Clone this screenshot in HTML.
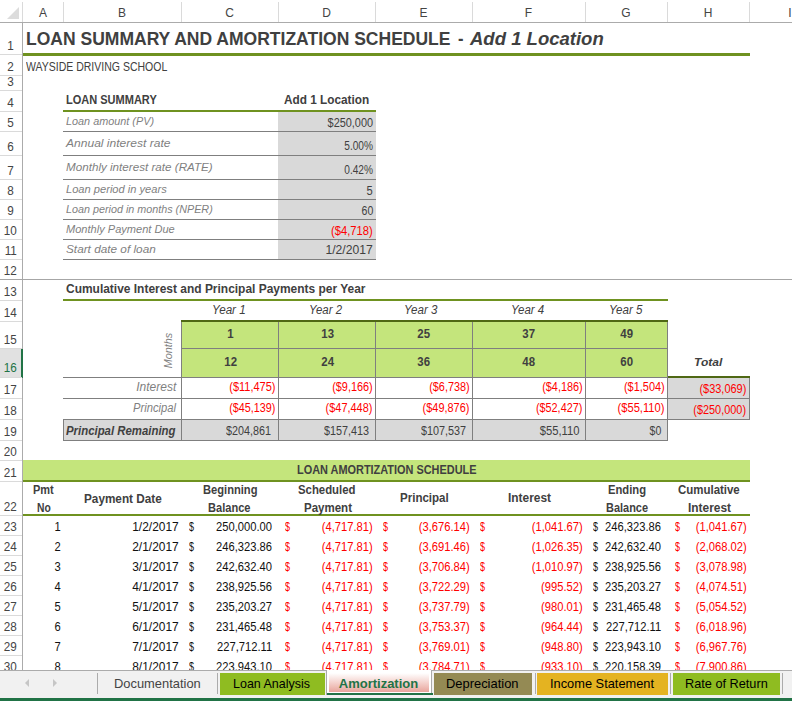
<!DOCTYPE html>
<html><head><meta charset="utf-8"><title>Loan Amortization</title>
<style>
html,body{margin:0;padding:0;background:#ffffff;}
#s{position:relative;width:792px;height:701px;overflow:hidden;background:#ffffff;font-family:"Liberation Sans", sans-serif;}
#s div,#s span,#s svg{position:absolute;}
#s span{white-space:pre;}
</style></head><body><div id="s">
<div style="left:0px;top:0px;width:792px;height:22px;background:#ffffff;"></div>
<div style="left:0px;top:22px;width:792px;height:1px;background:#ababab;"></div>
<div style="left:22px;top:22px;width:1px;height:648px;background:#ababab;"></div>
<div style="left:22px;top:2px;width:1px;height:20px;background:#dadada;"></div>
<svg style="left:6px;top:6px" width="14" height="14"><polygon points="13,1 13,13 1,13" fill="#dcdcdc"/></svg>
<div style="left:63px;top:2px;width:1px;height:20px;background:#dadada;"></div>
<div style="left:181px;top:2px;width:1px;height:20px;background:#dadada;"></div>
<div style="left:278px;top:2px;width:1px;height:20px;background:#dadada;"></div>
<div style="left:375px;top:2px;width:1px;height:20px;background:#dadada;"></div>
<div style="left:472px;top:2px;width:1px;height:20px;background:#dadada;"></div>
<div style="left:585px;top:2px;width:1px;height:20px;background:#dadada;"></div>
<div style="left:667px;top:2px;width:1px;height:20px;background:#dadada;"></div>
<div style="left:749px;top:2px;width:1px;height:20px;background:#dadada;"></div>
<div style="left:0px;top:54px;width:22px;height:1px;background:#dadada;"></div>
<div style="left:0px;top:75px;width:22px;height:1px;background:#dadada;"></div>
<div style="left:0px;top:90px;width:22px;height:1px;background:#dadada;"></div>
<div style="left:0px;top:111px;width:22px;height:1px;background:#dadada;"></div>
<div style="left:0px;top:131px;width:22px;height:1px;background:#dadada;"></div>
<div style="left:0px;top:155px;width:22px;height:1px;background:#dadada;"></div>
<div style="left:0px;top:179px;width:22px;height:1px;background:#dadada;"></div>
<div style="left:0px;top:199px;width:22px;height:1px;background:#dadada;"></div>
<div style="left:0px;top:219px;width:22px;height:1px;background:#dadada;"></div>
<div style="left:0px;top:239px;width:22px;height:1px;background:#dadada;"></div>
<div style="left:0px;top:259px;width:22px;height:1px;background:#dadada;"></div>
<div style="left:0px;top:279px;width:22px;height:1px;background:#dadada;"></div>
<div style="left:0px;top:300px;width:22px;height:1px;background:#dadada;"></div>
<div style="left:0px;top:321px;width:22px;height:1px;background:#dadada;"></div>
<div style="left:0px;top:348px;width:22px;height:1px;background:#dadada;"></div>
<div style="left:0px;top:349px;width:21px;height:28px;background:#e1e1e1;"></div>
<div style="left:21px;top:349px;width:2px;height:29px;background:#217346;"></div>
<div style="left:0px;top:377px;width:22px;height:1px;background:#dadada;"></div>
<div style="left:0px;top:398px;width:22px;height:1px;background:#dadada;"></div>
<div style="left:0px;top:419px;width:22px;height:1px;background:#dadada;"></div>
<div style="left:0px;top:440px;width:22px;height:1px;background:#dadada;"></div>
<div style="left:0px;top:460px;width:22px;height:1px;background:#dadada;"></div>
<div style="left:0px;top:481px;width:22px;height:1px;background:#dadada;"></div>
<div style="left:0px;top:515px;width:22px;height:1px;background:#dadada;"></div>
<div style="left:0px;top:535px;width:22px;height:1px;background:#dadada;"></div>
<div style="left:0px;top:555px;width:22px;height:1px;background:#dadada;"></div>
<div style="left:0px;top:575px;width:22px;height:1px;background:#dadada;"></div>
<div style="left:0px;top:595px;width:22px;height:1px;background:#dadada;"></div>
<div style="left:0px;top:615px;width:22px;height:1px;background:#dadada;"></div>
<div style="left:0px;top:635px;width:22px;height:1px;background:#dadada;"></div>
<div style="left:0px;top:655px;width:22px;height:1px;background:#dadada;"></div>
<div style="left:23px;top:53px;width:727px;height:3px;background:#6f9220;"></div>
<div style="left:63px;top:110px;width:313px;height:2px;background:#6f9220;"></div>
<div style="left:278px;top:112px;width:98px;height:147px;background:#d9d9d9;"></div>
<div style="left:63px;top:131px;width:313px;height:1px;background:#7f7f7f;"></div>
<div style="left:63px;top:155px;width:313px;height:1px;background:#7f7f7f;"></div>
<div style="left:63px;top:179px;width:313px;height:1px;background:#7f7f7f;"></div>
<div style="left:63px;top:199px;width:313px;height:1px;background:#7f7f7f;"></div>
<div style="left:63px;top:219px;width:313px;height:1px;background:#7f7f7f;"></div>
<div style="left:63px;top:239px;width:313px;height:1px;background:#7f7f7f;"></div>
<div style="left:63px;top:259px;width:313px;height:1px;background:#7f7f7f;"></div>
<div style="left:0px;top:279px;width:792px;height:1px;background:#a6a6a6;"></div>
<div style="left:63px;top:299px;width:605px;height:2px;background:#6f9220;"></div>
<div style="left:181px;top:320px;width:486px;height:57px;background:#c4e57c;"></div>
<div style="left:181px;top:320px;width:487px;height:2px;background:#4f6814;"></div>
<div style="left:181px;top:348px;width:486px;height:1px;background:#7f7f7f;"></div>
<div style="left:63px;top:377px;width:604px;height:1px;background:#7f7f7f;"></div>
<div style="left:63px;top:398px;width:686px;height:1px;background:#7f7f7f;"></div>
<div style="left:63px;top:419px;width:686px;height:1px;background:#7f7f7f;"></div>
<div style="left:63px;top:420px;width:604px;height:20px;background:#d9d9d9;"></div>
<div style="left:63px;top:440px;width:605px;height:1px;background:#7f7f7f;"></div>
<div style="left:63px;top:419px;width:1px;height:22px;background:#7f7f7f;"></div>
<div style="left:667px;top:378px;width:82px;height:41px;background:#d9d9d9;"></div>
<div style="left:667px;top:376px;width:83px;height:2px;background:#4f6814;"></div>
<div style="left:749px;top:378px;width:1px;height:42px;background:#7f7f7f;"></div>
<div style="left:667px;top:398px;width:82px;height:1px;background:#7f7f7f;"></div>
<div style="left:667px;top:419px;width:83px;height:1px;background:#7f7f7f;"></div>
<div style="left:181px;top:322px;width:1px;height:119px;background:#7f7f7f;"></div>
<div style="left:278px;top:322px;width:1px;height:119px;background:#7f7f7f;"></div>
<div style="left:375px;top:322px;width:1px;height:119px;background:#7f7f7f;"></div>
<div style="left:472px;top:322px;width:1px;height:119px;background:#7f7f7f;"></div>
<div style="left:585px;top:322px;width:1px;height:119px;background:#7f7f7f;"></div>
<div style="left:667px;top:322px;width:1px;height:119px;background:#7f7f7f;"></div>
<div style="left:23px;top:460px;width:727px;height:20px;background:#c4e57c;"></div>
<div style="left:23px;top:480px;width:727px;height:2px;background:#6f9220;"></div>
<div style="left:23px;top:514px;width:727px;height:2px;background:#6f9220;"></div>
<span style="font-size:12px;line-height:12px;color:#444444;left:38.99px;top:6.84px;">A</span>
<span style="font-size:12px;line-height:12px;color:#444444;left:117.99px;top:6.84px;">B</span>
<span style="font-size:12px;line-height:12px;color:#444444;left:225.16px;top:6.84px;">C</span>
<span style="font-size:12px;line-height:12px;color:#444444;left:322.16px;top:6.84px;">D</span>
<span style="font-size:12px;line-height:12px;color:#444444;left:419.49px;top:6.84px;">E</span>
<span style="font-size:12px;line-height:12px;color:#444444;left:524.83px;top:6.84px;">F</span>
<span style="font-size:12px;line-height:12px;color:#444444;left:621.33px;top:6.84px;">G</span>
<span style="font-size:12px;line-height:12px;color:#444444;left:703.66px;top:6.84px;">H</span>
<span style="font-size:12px;line-height:12px;color:#444444;left:788.33px;top:6.84px;">I</span>
<span style="font-size:13px;line-height:13px;color:#444444;left:6.88px;top:38.70px;transform:scaleX(0.9000);transform-origin:center center;">1</span>
<span style="font-size:13px;line-height:13px;color:#444444;left:6.88px;top:59.70px;transform:scaleX(0.9000);transform-origin:center center;">2</span>
<span style="font-size:13px;line-height:13px;color:#444444;left:6.88px;top:74.70px;transform:scaleX(0.9000);transform-origin:center center;">3</span>
<span style="font-size:13px;line-height:13px;color:#444444;left:6.88px;top:95.70px;transform:scaleX(0.9000);transform-origin:center center;">4</span>
<span style="font-size:13px;line-height:13px;color:#444444;left:6.88px;top:115.70px;transform:scaleX(0.9000);transform-origin:center center;">5</span>
<span style="font-size:13px;line-height:13px;color:#444444;left:6.88px;top:139.70px;transform:scaleX(0.9000);transform-origin:center center;">6</span>
<span style="font-size:13px;line-height:13px;color:#444444;left:6.88px;top:163.70px;transform:scaleX(0.9000);transform-origin:center center;">7</span>
<span style="font-size:13px;line-height:13px;color:#444444;left:6.88px;top:183.70px;transform:scaleX(0.9000);transform-origin:center center;">8</span>
<span style="font-size:13px;line-height:13px;color:#444444;left:6.88px;top:203.70px;transform:scaleX(0.9000);transform-origin:center center;">9</span>
<span style="font-size:13px;line-height:13px;color:#444444;left:3.27px;top:223.70px;transform:scaleX(0.9000);transform-origin:center center;">10</span>
<span style="font-size:13px;line-height:13px;color:#444444;left:3.75px;top:243.70px;transform:scaleX(0.9000);transform-origin:center center;">11</span>
<span style="font-size:13px;line-height:13px;color:#444444;left:3.27px;top:263.70px;transform:scaleX(0.9000);transform-origin:center center;">12</span>
<span style="font-size:13px;line-height:13px;color:#444444;left:3.27px;top:284.70px;transform:scaleX(0.9000);transform-origin:center center;">13</span>
<span style="font-size:13px;line-height:13px;color:#444444;left:3.27px;top:305.70px;transform:scaleX(0.9000);transform-origin:center center;">14</span>
<span style="font-size:13px;line-height:13px;color:#444444;left:3.27px;top:332.70px;transform:scaleX(0.9000);transform-origin:center center;">15</span>
<span style="font-size:13px;line-height:13px;color:#217346;left:3.27px;top:361.00px;transform:scaleX(0.9000);transform-origin:center center;">16</span>
<span style="font-size:13px;line-height:13px;color:#444444;left:3.27px;top:382.70px;transform:scaleX(0.9000);transform-origin:center center;">17</span>
<span style="font-size:13px;line-height:13px;color:#444444;left:3.27px;top:403.70px;transform:scaleX(0.9000);transform-origin:center center;">18</span>
<span style="font-size:13px;line-height:13px;color:#444444;left:3.27px;top:424.70px;transform:scaleX(0.9000);transform-origin:center center;">19</span>
<span style="font-size:13px;line-height:13px;color:#444444;left:3.27px;top:444.70px;transform:scaleX(0.9000);transform-origin:center center;">20</span>
<span style="font-size:13px;line-height:13px;color:#444444;left:3.27px;top:465.70px;transform:scaleX(0.9000);transform-origin:center center;">21</span>
<span style="font-size:13px;line-height:13px;color:#444444;left:3.27px;top:499.70px;transform:scaleX(0.9000);transform-origin:center center;">22</span>
<span style="font-size:13px;line-height:13px;color:#444444;left:3.27px;top:519.70px;transform:scaleX(0.9000);transform-origin:center center;">23</span>
<span style="font-size:13px;line-height:13px;color:#444444;left:3.27px;top:539.70px;transform:scaleX(0.9000);transform-origin:center center;">24</span>
<span style="font-size:13px;line-height:13px;color:#444444;left:3.27px;top:559.70px;transform:scaleX(0.9000);transform-origin:center center;">25</span>
<span style="font-size:13px;line-height:13px;color:#444444;left:3.27px;top:579.70px;transform:scaleX(0.9000);transform-origin:center center;">26</span>
<span style="font-size:13px;line-height:13px;color:#444444;left:3.27px;top:599.70px;transform:scaleX(0.9000);transform-origin:center center;">27</span>
<span style="font-size:13px;line-height:13px;color:#444444;left:3.27px;top:619.70px;transform:scaleX(0.9000);transform-origin:center center;">28</span>
<span style="font-size:13px;line-height:13px;color:#444444;left:3.27px;top:639.70px;transform:scaleX(0.9000);transform-origin:center center;">29</span>
<span style="font-size:13px;line-height:13px;color:#444444;left:3.27px;top:659.70px;transform:scaleX(0.9000);transform-origin:center center;">30</span>
<span style="font-size:19px;line-height:19px;color:#404040;font-weight:bold;left:26.30px;top:28.92px;transform:scaleX(0.9217);transform-origin:left center;">LOAN SUMMARY AND AMORTIZATION SCHEDULE</span>
<span style="font-size:19px;line-height:19px;color:#404040;font-weight:bold;left:458.00px;top:28.92px;transform:scaleX(0.8691);transform-origin:left center;">-</span>
<span style="font-size:19px;line-height:19px;color:#404040;font-weight:bold;font-style:italic;left:469.75px;top:28.92px;transform:scaleX(0.9746);transform-origin:left center;">Add 1 Location</span>
<span style="font-size:12px;line-height:12px;color:#404040;left:25.50px;top:60.59px;transform:scaleX(0.8754);transform-origin:left center;">WAYSIDE DRIVING SCHOOL</span>
<span style="font-size:12px;line-height:12px;color:#404040;font-weight:bold;left:66.25px;top:93.84px;transform:scaleX(0.9177);transform-origin:left center;">LOAN SUMMARY</span>
<span style="font-size:12px;line-height:12px;color:#404040;font-weight:bold;left:284.25px;top:93.84px;transform:scaleX(0.9836);transform-origin:left center;">Add 1 Location</span>
<span style="font-size:11.5px;line-height:11.5px;color:#7f7f7f;font-style:italic;left:66.25px;top:115.92px;transform:scaleX(0.9428);transform-origin:left center;">Loan amount (PV)</span>
<span style="font-size:11.5px;line-height:11.5px;color:#7f7f7f;font-style:italic;left:66.25px;top:137.92px;transform:scaleX(1.0478);transform-origin:left center;">Annual interest rate</span>
<span style="font-size:11.5px;line-height:11.5px;color:#7f7f7f;font-style:italic;left:66.25px;top:161.92px;transform:scaleX(1.0131);transform-origin:left center;">Monthly interest rate (RATE)</span>
<span style="font-size:11.5px;line-height:11.5px;color:#7f7f7f;font-style:italic;left:66.25px;top:183.67px;transform:scaleX(0.9667);transform-origin:left center;">Loan period in years</span>
<span style="font-size:11.5px;line-height:11.5px;color:#7f7f7f;font-style:italic;left:66.25px;top:203.67px;transform:scaleX(0.9370);transform-origin:left center;">Loan period in months (NPER)</span>
<span style="font-size:11.5px;line-height:11.5px;color:#7f7f7f;font-style:italic;left:66.25px;top:223.67px;transform:scaleX(0.9612);transform-origin:left center;">Monthly Payment Due</span>
<span style="font-size:11.5px;line-height:11.5px;color:#7f7f7f;font-style:italic;left:66.25px;top:243.67px;transform:scaleX(1.0246);transform-origin:left center;">Start date of loan</span>
<span style="font-size:12px;line-height:12px;color:#404040;right:419.00px;top:116.59px;transform:scaleX(0.9089);transform-origin:right center;">$250,000</span>
<span style="font-size:12px;line-height:12px;color:#404040;right:419.00px;top:140.34px;transform:scaleX(0.8448);transform-origin:right center;">5.00%</span>
<span style="font-size:12px;line-height:12px;color:#404040;right:419.00px;top:164.34px;transform:scaleX(0.8448);transform-origin:right center;">0.42%</span>
<span style="font-size:12px;line-height:12px;color:#404040;right:419.00px;top:184.59px;transform:scaleX(0.9300);transform-origin:right center;">5</span>
<span style="font-size:12px;line-height:12px;color:#404040;right:419.00px;top:204.59px;transform:scaleX(0.8795);transform-origin:right center;">60</span>
<span style="font-size:12px;line-height:12px;color:#ff0000;right:419.00px;top:224.84px;transform:scaleX(0.9339);transform-origin:right center;">($4,718)</span>
<span style="font-size:12px;line-height:12px;color:#404040;right:419.00px;top:244.09px;transform:scaleX(1.0114);transform-origin:right center;">1/2/2017</span>
<span style="font-size:12px;line-height:12px;color:#404040;font-weight:bold;left:66.25px;top:282.84px;transform:scaleX(0.9965);transform-origin:left center;">Cumulative Interest and Principal Payments per Year</span>
<span style="font-size:12px;line-height:12px;color:#404040;font-style:italic;left:212.00px;top:304.09px;transform:scaleX(0.9725);transform-origin:left center;">Year 1</span>
<span style="font-size:12px;line-height:12px;color:#404040;font-style:italic;left:309.00px;top:304.09px;transform:scaleX(0.9509);transform-origin:left center;">Year 2</span>
<span style="font-size:12px;line-height:12px;color:#404040;font-style:italic;left:403.50px;top:304.09px;transform:scaleX(0.9653);transform-origin:left center;">Year 3</span>
<span style="font-size:12px;line-height:12px;color:#404040;font-style:italic;left:510.75px;top:304.09px;transform:scaleX(0.9581);transform-origin:left center;">Year 4</span>
<span style="font-size:12px;line-height:12px;color:#404040;font-style:italic;left:609.00px;top:304.09px;transform:scaleX(0.9653);transform-origin:left center;">Year 5</span>
<span style="font-size:12px;line-height:12px;color:#404040;font-weight:bold;left:226.91px;top:328.24px;transform:scaleX(0.9500);transform-origin:center center;">1</span>
<span style="font-size:12px;line-height:12px;color:#404040;font-weight:bold;left:223.57px;top:356.24px;transform:scaleX(0.9500);transform-origin:center center;">12</span>
<span style="font-size:12px;line-height:12px;color:#404040;font-weight:bold;left:320.82px;top:328.24px;transform:scaleX(0.9500);transform-origin:center center;">13</span>
<span style="font-size:12px;line-height:12px;color:#404040;font-weight:bold;left:320.82px;top:356.24px;transform:scaleX(0.9500);transform-origin:center center;">24</span>
<span style="font-size:12px;line-height:12px;color:#404040;font-weight:bold;left:417.32px;top:328.24px;transform:scaleX(0.9500);transform-origin:center center;">25</span>
<span style="font-size:12px;line-height:12px;color:#404040;font-weight:bold;left:417.32px;top:356.24px;transform:scaleX(0.9500);transform-origin:center center;">36</span>
<span style="font-size:12px;line-height:12px;color:#404040;font-weight:bold;left:522.32px;top:328.24px;transform:scaleX(0.9500);transform-origin:center center;">37</span>
<span style="font-size:12px;line-height:12px;color:#404040;font-weight:bold;left:522.32px;top:356.24px;transform:scaleX(0.9500);transform-origin:center center;">48</span>
<span style="font-size:12px;line-height:12px;color:#404040;font-weight:bold;left:620.32px;top:328.24px;transform:scaleX(0.9500);transform-origin:center center;">49</span>
<span style="font-size:12px;line-height:12px;color:#404040;font-weight:bold;left:620.32px;top:356.24px;transform:scaleX(0.9500);transform-origin:center center;">60</span>
<span style="font-size:11px;line-height:11px;color:#7f7f7f;font-style:italic;left:150.46px;top:344.50px;transform:rotate(-90deg) scaleX(0.9840);transform-origin:center">Months</span>
<span style="font-size:11px;line-height:11px;color:#404040;font-weight:bold;font-style:italic;left:694.25px;top:356.99px;transform:scaleX(1.0918);transform-origin:left center;">Total</span>
<span style="font-size:12px;line-height:12px;color:#7f7f7f;font-style:italic;right:615.75px;top:380.59px;">Interest</span>
<span style="font-size:12px;line-height:12px;color:#7f7f7f;font-style:italic;right:615.75px;top:401.59px;transform:scaleX(0.9341);transform-origin:right center;">Principal</span>
<span style="font-size:12px;line-height:12px;color:#404040;font-weight:bold;font-style:italic;left:66.25px;top:425.14px;transform:scaleX(0.9492);transform-origin:left center;">Principal Remaining</span>
<span style="font-size:12px;line-height:12px;color:#ff0000;right:517.00px;top:381.09px;transform:scaleX(0.9161);transform-origin:right center;">($11,475)</span>
<span style="font-size:12px;line-height:12px;color:#ff0000;right:419.75px;top:381.09px;transform:scaleX(0.9060);transform-origin:right center;">($9,166)</span>
<span style="font-size:12px;line-height:12px;color:#ff0000;right:322.75px;top:381.09px;transform:scaleX(0.9060);transform-origin:right center;">($6,738)</span>
<span style="font-size:12px;line-height:12px;color:#ff0000;right:209.75px;top:381.09px;transform:scaleX(0.9060);transform-origin:right center;">($4,186)</span>
<span style="font-size:12px;line-height:12px;color:#ff0000;right:127.50px;top:381.09px;transform:scaleX(0.9116);transform-origin:right center;">($1,504)</span>
<span style="font-size:12px;line-height:12px;color:#ff0000;right:517.00px;top:401.84px;transform:scaleX(0.9002);transform-origin:right center;">($45,139)</span>
<span style="font-size:12px;line-height:12px;color:#ff0000;right:419.75px;top:401.84px;transform:scaleX(0.9100);transform-origin:right center;">($47,448)</span>
<span style="font-size:12px;line-height:12px;color:#ff0000;right:322.75px;top:401.84px;transform:scaleX(0.9100);transform-origin:right center;">($49,876)</span>
<span style="font-size:12px;line-height:12px;color:#ff0000;right:209.75px;top:401.84px;transform:scaleX(0.9051);transform-origin:right center;">($52,427)</span>
<span style="font-size:12px;line-height:12px;color:#ff0000;right:127.50px;top:401.84px;transform:scaleX(0.9310);transform-origin:right center;">($55,110)</span>
<span style="font-size:12px;line-height:12px;color:#404040;right:520.75px;top:425.14px;transform:scaleX(0.8989);transform-origin:right center;">$204,861</span>
<span style="font-size:12px;line-height:12px;color:#404040;right:423.25px;top:425.14px;transform:scaleX(0.8989);transform-origin:right center;">$157,413</span>
<span style="font-size:12px;line-height:12px;color:#404040;right:326.25px;top:425.14px;transform:scaleX(0.8989);transform-origin:right center;">$107,537</span>
<span style="font-size:12px;line-height:12px;color:#404040;right:212.75px;top:425.14px;transform:scaleX(0.9353);transform-origin:right center;">$55,110</span>
<span style="font-size:12px;line-height:12px;color:#404040;right:130.75px;top:425.14px;transform:scaleX(0.8795);transform-origin:right center;">$0</span>
<span style="font-size:12px;line-height:12px;color:#ff0000;right:45.50px;top:383.14px;transform:scaleX(0.9148);transform-origin:right center;">($33,069)</span>
<span style="font-size:12px;line-height:12px;color:#ff0000;right:45.50px;top:404.04px;transform:scaleX(0.9087);transform-origin:right center;">($250,000)</span>
<span style="font-size:12px;line-height:12px;color:#404040;font-weight:bold;left:296.75px;top:463.59px;transform:scaleX(0.9097);transform-origin:left center;">LOAN AMORTIZATION SCHEDULE</span>
<span style="font-size:12px;line-height:12px;color:#404040;font-weight:bold;left:32.50px;top:483.59px;transform:scaleX(0.9152);transform-origin:left center;">Pmt</span>
<span style="font-size:12px;line-height:12px;color:#404040;font-weight:bold;left:36.75px;top:501.59px;transform:scaleX(0.8594);transform-origin:left center;">No</span>
<span style="font-size:12px;line-height:12px;color:#404040;font-weight:bold;left:83.75px;top:493.14px;transform:scaleX(0.9795);transform-origin:left center;">Payment Date</span>
<span style="font-size:12px;line-height:12px;color:#404040;font-weight:bold;left:202.50px;top:483.59px;transform:scaleX(0.9289);transform-origin:left center;">Beginning</span>
<span style="font-size:12px;line-height:12px;color:#404040;font-weight:bold;left:208.25px;top:501.59px;transform:scaleX(0.9233);transform-origin:left center;">Balance</span>
<span style="font-size:12px;line-height:12px;color:#404040;font-weight:bold;left:298.25px;top:483.59px;transform:scaleX(0.9475);transform-origin:left center;">Scheduled</span>
<span style="font-size:12px;line-height:12px;color:#404040;font-weight:bold;left:303.75px;top:501.59px;transform:scaleX(0.9594);transform-origin:left center;">Payment</span>
<span style="font-size:12px;line-height:12px;color:#404040;font-weight:bold;left:399.50px;top:491.59px;transform:scaleX(0.9618);transform-origin:left center;">Principal</span>
<span style="font-size:12px;line-height:12px;color:#404040;font-weight:bold;left:507.50px;top:491.59px;transform:scaleX(0.9917);transform-origin:left center;">Interest</span>
<span style="font-size:12px;line-height:12px;color:#404040;font-weight:bold;left:608.25px;top:483.59px;transform:scaleX(0.9343);transform-origin:left center;">Ending</span>
<span style="font-size:12px;line-height:12px;color:#404040;font-weight:bold;left:605.50px;top:501.59px;transform:scaleX(0.9124);transform-origin:left center;">Balance</span>
<span style="font-size:12px;line-height:12px;color:#404040;font-weight:bold;left:677.50px;top:483.59px;transform:scaleX(0.9546);transform-origin:left center;">Cumulative</span>
<span style="font-size:12px;line-height:12px;color:#404040;font-weight:bold;left:687.50px;top:501.59px;transform:scaleX(0.9917);transform-origin:left center;">Interest</span>
<span style="font-size:12px;line-height:12px;color:#111111;right:731.50px;top:520.64px;transform:scaleX(0.9320);transform-origin:right center;">1</span>
<span style="font-size:12px;line-height:12px;color:#111111;right:613.75px;top:520.64px;transform:scaleX(0.9953);transform-origin:right center;">1/2/2017</span>
<span style="font-size:12px;line-height:12px;color:#111111;left:188.75px;top:520.64px;transform:scaleX(0.7477);transform-origin:left center;">$</span>
<span style="font-size:12px;line-height:12px;color:#111111;right:519.50px;top:520.64px;transform:scaleX(0.9320);transform-origin:right center;">250,000.00</span>
<span style="font-size:12px;line-height:12px;color:#ff0000;left:285.00px;top:520.64px;transform:scaleX(0.7477);transform-origin:left center;">$</span>
<span style="font-size:12px;line-height:12px;color:#ff0000;right:419.50px;top:520.64px;transform:scaleX(0.9320);transform-origin:right center;">(4,717.81)</span>
<span style="font-size:12px;line-height:12px;color:#ff0000;left:382.50px;top:520.64px;transform:scaleX(0.7477);transform-origin:left center;">$</span>
<span style="font-size:12px;line-height:12px;color:#ff0000;right:322.50px;top:520.64px;transform:scaleX(0.9320);transform-origin:right center;">(3,676.14)</span>
<span style="font-size:12px;line-height:12px;color:#ff0000;left:479.50px;top:520.64px;transform:scaleX(0.7477);transform-origin:left center;">$</span>
<span style="font-size:12px;line-height:12px;color:#ff0000;right:209.50px;top:520.64px;transform:scaleX(0.9320);transform-origin:right center;">(1,041.67)</span>
<span style="font-size:12px;line-height:12px;color:#111111;left:593.25px;top:520.64px;transform:scaleX(0.7477);transform-origin:left center;">$</span>
<span style="font-size:12px;line-height:12px;color:#111111;right:131.25px;top:520.64px;transform:scaleX(0.9320);transform-origin:right center;">246,323.86</span>
<span style="font-size:12px;line-height:12px;color:#ff0000;left:675.00px;top:520.64px;transform:scaleX(0.7477);transform-origin:left center;">$</span>
<span style="font-size:12px;line-height:12px;color:#ff0000;right:45.50px;top:520.64px;transform:scaleX(0.9320);transform-origin:right center;">(1,041.67)</span>
<span style="font-size:12px;line-height:12px;color:#111111;right:731.50px;top:540.64px;transform:scaleX(0.9320);transform-origin:right center;">2</span>
<span style="font-size:12px;line-height:12px;color:#111111;right:613.75px;top:540.64px;transform:scaleX(0.9953);transform-origin:right center;">2/1/2017</span>
<span style="font-size:12px;line-height:12px;color:#111111;left:188.75px;top:540.64px;transform:scaleX(0.7477);transform-origin:left center;">$</span>
<span style="font-size:12px;line-height:12px;color:#111111;right:519.50px;top:540.64px;transform:scaleX(0.9320);transform-origin:right center;">246,323.86</span>
<span style="font-size:12px;line-height:12px;color:#ff0000;left:285.00px;top:540.64px;transform:scaleX(0.7477);transform-origin:left center;">$</span>
<span style="font-size:12px;line-height:12px;color:#ff0000;right:419.50px;top:540.64px;transform:scaleX(0.9320);transform-origin:right center;">(4,717.81)</span>
<span style="font-size:12px;line-height:12px;color:#ff0000;left:382.50px;top:540.64px;transform:scaleX(0.7477);transform-origin:left center;">$</span>
<span style="font-size:12px;line-height:12px;color:#ff0000;right:322.50px;top:540.64px;transform:scaleX(0.9320);transform-origin:right center;">(3,691.46)</span>
<span style="font-size:12px;line-height:12px;color:#ff0000;left:479.50px;top:540.64px;transform:scaleX(0.7477);transform-origin:left center;">$</span>
<span style="font-size:12px;line-height:12px;color:#ff0000;right:209.50px;top:540.64px;transform:scaleX(0.9320);transform-origin:right center;">(1,026.35)</span>
<span style="font-size:12px;line-height:12px;color:#111111;left:593.25px;top:540.64px;transform:scaleX(0.7477);transform-origin:left center;">$</span>
<span style="font-size:12px;line-height:12px;color:#111111;right:131.25px;top:540.64px;transform:scaleX(0.9320);transform-origin:right center;">242,632.40</span>
<span style="font-size:12px;line-height:12px;color:#ff0000;left:675.00px;top:540.64px;transform:scaleX(0.7477);transform-origin:left center;">$</span>
<span style="font-size:12px;line-height:12px;color:#ff0000;right:45.50px;top:540.64px;transform:scaleX(0.9320);transform-origin:right center;">(2,068.02)</span>
<span style="font-size:12px;line-height:12px;color:#111111;right:731.50px;top:560.64px;transform:scaleX(0.9320);transform-origin:right center;">3</span>
<span style="font-size:12px;line-height:12px;color:#111111;right:613.75px;top:560.64px;transform:scaleX(0.9953);transform-origin:right center;">3/1/2017</span>
<span style="font-size:12px;line-height:12px;color:#111111;left:188.75px;top:560.64px;transform:scaleX(0.7477);transform-origin:left center;">$</span>
<span style="font-size:12px;line-height:12px;color:#111111;right:519.50px;top:560.64px;transform:scaleX(0.9320);transform-origin:right center;">242,632.40</span>
<span style="font-size:12px;line-height:12px;color:#ff0000;left:285.00px;top:560.64px;transform:scaleX(0.7477);transform-origin:left center;">$</span>
<span style="font-size:12px;line-height:12px;color:#ff0000;right:419.50px;top:560.64px;transform:scaleX(0.9320);transform-origin:right center;">(4,717.81)</span>
<span style="font-size:12px;line-height:12px;color:#ff0000;left:382.50px;top:560.64px;transform:scaleX(0.7477);transform-origin:left center;">$</span>
<span style="font-size:12px;line-height:12px;color:#ff0000;right:322.50px;top:560.64px;transform:scaleX(0.9320);transform-origin:right center;">(3,706.84)</span>
<span style="font-size:12px;line-height:12px;color:#ff0000;left:479.50px;top:560.64px;transform:scaleX(0.7477);transform-origin:left center;">$</span>
<span style="font-size:12px;line-height:12px;color:#ff0000;right:209.50px;top:560.64px;transform:scaleX(0.9320);transform-origin:right center;">(1,010.97)</span>
<span style="font-size:12px;line-height:12px;color:#111111;left:593.25px;top:560.64px;transform:scaleX(0.7477);transform-origin:left center;">$</span>
<span style="font-size:12px;line-height:12px;color:#111111;right:131.25px;top:560.64px;transform:scaleX(0.9320);transform-origin:right center;">238,925.56</span>
<span style="font-size:12px;line-height:12px;color:#ff0000;left:675.00px;top:560.64px;transform:scaleX(0.7477);transform-origin:left center;">$</span>
<span style="font-size:12px;line-height:12px;color:#ff0000;right:45.50px;top:560.64px;transform:scaleX(0.9320);transform-origin:right center;">(3,078.98)</span>
<span style="font-size:12px;line-height:12px;color:#111111;right:731.50px;top:580.64px;transform:scaleX(0.9320);transform-origin:right center;">4</span>
<span style="font-size:12px;line-height:12px;color:#111111;right:613.75px;top:580.64px;transform:scaleX(0.9953);transform-origin:right center;">4/1/2017</span>
<span style="font-size:12px;line-height:12px;color:#111111;left:188.75px;top:580.64px;transform:scaleX(0.7477);transform-origin:left center;">$</span>
<span style="font-size:12px;line-height:12px;color:#111111;right:519.50px;top:580.64px;transform:scaleX(0.9320);transform-origin:right center;">238,925.56</span>
<span style="font-size:12px;line-height:12px;color:#ff0000;left:285.00px;top:580.64px;transform:scaleX(0.7477);transform-origin:left center;">$</span>
<span style="font-size:12px;line-height:12px;color:#ff0000;right:419.50px;top:580.64px;transform:scaleX(0.9320);transform-origin:right center;">(4,717.81)</span>
<span style="font-size:12px;line-height:12px;color:#ff0000;left:382.50px;top:580.64px;transform:scaleX(0.7477);transform-origin:left center;">$</span>
<span style="font-size:12px;line-height:12px;color:#ff0000;right:322.50px;top:580.64px;transform:scaleX(0.9320);transform-origin:right center;">(3,722.29)</span>
<span style="font-size:12px;line-height:12px;color:#ff0000;left:479.50px;top:580.64px;transform:scaleX(0.7477);transform-origin:left center;">$</span>
<span style="font-size:12px;line-height:12px;color:#ff0000;right:209.50px;top:580.64px;transform:scaleX(0.9320);transform-origin:right center;">(995.52)</span>
<span style="font-size:12px;line-height:12px;color:#111111;left:593.25px;top:580.64px;transform:scaleX(0.7477);transform-origin:left center;">$</span>
<span style="font-size:12px;line-height:12px;color:#111111;right:131.25px;top:580.64px;transform:scaleX(0.9320);transform-origin:right center;">235,203.27</span>
<span style="font-size:12px;line-height:12px;color:#ff0000;left:675.00px;top:580.64px;transform:scaleX(0.7477);transform-origin:left center;">$</span>
<span style="font-size:12px;line-height:12px;color:#ff0000;right:45.50px;top:580.64px;transform:scaleX(0.9320);transform-origin:right center;">(4,074.51)</span>
<span style="font-size:12px;line-height:12px;color:#111111;right:731.50px;top:600.64px;transform:scaleX(0.9320);transform-origin:right center;">5</span>
<span style="font-size:12px;line-height:12px;color:#111111;right:613.75px;top:600.64px;transform:scaleX(0.9953);transform-origin:right center;">5/1/2017</span>
<span style="font-size:12px;line-height:12px;color:#111111;left:188.75px;top:600.64px;transform:scaleX(0.7477);transform-origin:left center;">$</span>
<span style="font-size:12px;line-height:12px;color:#111111;right:519.50px;top:600.64px;transform:scaleX(0.9320);transform-origin:right center;">235,203.27</span>
<span style="font-size:12px;line-height:12px;color:#ff0000;left:285.00px;top:600.64px;transform:scaleX(0.7477);transform-origin:left center;">$</span>
<span style="font-size:12px;line-height:12px;color:#ff0000;right:419.50px;top:600.64px;transform:scaleX(0.9320);transform-origin:right center;">(4,717.81)</span>
<span style="font-size:12px;line-height:12px;color:#ff0000;left:382.50px;top:600.64px;transform:scaleX(0.7477);transform-origin:left center;">$</span>
<span style="font-size:12px;line-height:12px;color:#ff0000;right:322.50px;top:600.64px;transform:scaleX(0.9320);transform-origin:right center;">(3,737.79)</span>
<span style="font-size:12px;line-height:12px;color:#ff0000;left:479.50px;top:600.64px;transform:scaleX(0.7477);transform-origin:left center;">$</span>
<span style="font-size:12px;line-height:12px;color:#ff0000;right:209.50px;top:600.64px;transform:scaleX(0.9320);transform-origin:right center;">(980.01)</span>
<span style="font-size:12px;line-height:12px;color:#111111;left:593.25px;top:600.64px;transform:scaleX(0.7477);transform-origin:left center;">$</span>
<span style="font-size:12px;line-height:12px;color:#111111;right:131.25px;top:600.64px;transform:scaleX(0.9320);transform-origin:right center;">231,465.48</span>
<span style="font-size:12px;line-height:12px;color:#ff0000;left:675.00px;top:600.64px;transform:scaleX(0.7477);transform-origin:left center;">$</span>
<span style="font-size:12px;line-height:12px;color:#ff0000;right:45.50px;top:600.64px;transform:scaleX(0.9320);transform-origin:right center;">(5,054.52)</span>
<span style="font-size:12px;line-height:12px;color:#111111;right:731.50px;top:620.64px;transform:scaleX(0.9320);transform-origin:right center;">6</span>
<span style="font-size:12px;line-height:12px;color:#111111;right:613.75px;top:620.64px;transform:scaleX(0.9953);transform-origin:right center;">6/1/2017</span>
<span style="font-size:12px;line-height:12px;color:#111111;left:188.75px;top:620.64px;transform:scaleX(0.7477);transform-origin:left center;">$</span>
<span style="font-size:12px;line-height:12px;color:#111111;right:519.50px;top:620.64px;transform:scaleX(0.9320);transform-origin:right center;">231,465.48</span>
<span style="font-size:12px;line-height:12px;color:#ff0000;left:285.00px;top:620.64px;transform:scaleX(0.7477);transform-origin:left center;">$</span>
<span style="font-size:12px;line-height:12px;color:#ff0000;right:419.50px;top:620.64px;transform:scaleX(0.9320);transform-origin:right center;">(4,717.81)</span>
<span style="font-size:12px;line-height:12px;color:#ff0000;left:382.50px;top:620.64px;transform:scaleX(0.7477);transform-origin:left center;">$</span>
<span style="font-size:12px;line-height:12px;color:#ff0000;right:322.50px;top:620.64px;transform:scaleX(0.9320);transform-origin:right center;">(3,753.37)</span>
<span style="font-size:12px;line-height:12px;color:#ff0000;left:479.50px;top:620.64px;transform:scaleX(0.7477);transform-origin:left center;">$</span>
<span style="font-size:12px;line-height:12px;color:#ff0000;right:209.50px;top:620.64px;transform:scaleX(0.9320);transform-origin:right center;">(964.44)</span>
<span style="font-size:12px;line-height:12px;color:#111111;left:593.25px;top:620.64px;transform:scaleX(0.7477);transform-origin:left center;">$</span>
<span style="font-size:12px;line-height:12px;color:#111111;right:131.25px;top:620.64px;transform:scaleX(0.9320);transform-origin:right center;">227,712.11</span>
<span style="font-size:12px;line-height:12px;color:#ff0000;left:675.00px;top:620.64px;transform:scaleX(0.7477);transform-origin:left center;">$</span>
<span style="font-size:12px;line-height:12px;color:#ff0000;right:45.50px;top:620.64px;transform:scaleX(0.9320);transform-origin:right center;">(6,018.96)</span>
<span style="font-size:12px;line-height:12px;color:#111111;right:731.50px;top:640.64px;transform:scaleX(0.9320);transform-origin:right center;">7</span>
<span style="font-size:12px;line-height:12px;color:#111111;right:613.75px;top:640.64px;transform:scaleX(0.9953);transform-origin:right center;">7/1/2017</span>
<span style="font-size:12px;line-height:12px;color:#111111;left:188.75px;top:640.64px;transform:scaleX(0.7477);transform-origin:left center;">$</span>
<span style="font-size:12px;line-height:12px;color:#111111;right:519.50px;top:640.64px;transform:scaleX(0.9320);transform-origin:right center;">227,712.11</span>
<span style="font-size:12px;line-height:12px;color:#ff0000;left:285.00px;top:640.64px;transform:scaleX(0.7477);transform-origin:left center;">$</span>
<span style="font-size:12px;line-height:12px;color:#ff0000;right:419.50px;top:640.64px;transform:scaleX(0.9320);transform-origin:right center;">(4,717.81)</span>
<span style="font-size:12px;line-height:12px;color:#ff0000;left:382.50px;top:640.64px;transform:scaleX(0.7477);transform-origin:left center;">$</span>
<span style="font-size:12px;line-height:12px;color:#ff0000;right:322.50px;top:640.64px;transform:scaleX(0.9320);transform-origin:right center;">(3,769.01)</span>
<span style="font-size:12px;line-height:12px;color:#ff0000;left:479.50px;top:640.64px;transform:scaleX(0.7477);transform-origin:left center;">$</span>
<span style="font-size:12px;line-height:12px;color:#ff0000;right:209.50px;top:640.64px;transform:scaleX(0.9320);transform-origin:right center;">(948.80)</span>
<span style="font-size:12px;line-height:12px;color:#111111;left:593.25px;top:640.64px;transform:scaleX(0.7477);transform-origin:left center;">$</span>
<span style="font-size:12px;line-height:12px;color:#111111;right:131.25px;top:640.64px;transform:scaleX(0.9320);transform-origin:right center;">223,943.10</span>
<span style="font-size:12px;line-height:12px;color:#ff0000;left:675.00px;top:640.64px;transform:scaleX(0.7477);transform-origin:left center;">$</span>
<span style="font-size:12px;line-height:12px;color:#ff0000;right:45.50px;top:640.64px;transform:scaleX(0.9320);transform-origin:right center;">(6,967.76)</span>
<span style="font-size:12px;line-height:12px;color:#111111;right:731.50px;top:661.14px;transform:scaleX(0.9320);transform-origin:right center;">8</span>
<span style="font-size:12px;line-height:12px;color:#111111;right:613.75px;top:661.14px;transform:scaleX(0.9953);transform-origin:right center;">8/1/2017</span>
<span style="font-size:12px;line-height:12px;color:#111111;left:188.75px;top:661.14px;transform:scaleX(0.7477);transform-origin:left center;">$</span>
<span style="font-size:12px;line-height:12px;color:#111111;right:519.50px;top:661.14px;transform:scaleX(0.9320);transform-origin:right center;">223,943.10</span>
<span style="font-size:12px;line-height:12px;color:#ff0000;left:285.00px;top:661.14px;transform:scaleX(0.7477);transform-origin:left center;">$</span>
<span style="font-size:12px;line-height:12px;color:#ff0000;right:419.50px;top:661.14px;transform:scaleX(0.9320);transform-origin:right center;">(4,717.81)</span>
<span style="font-size:12px;line-height:12px;color:#ff0000;left:382.50px;top:661.14px;transform:scaleX(0.7477);transform-origin:left center;">$</span>
<span style="font-size:12px;line-height:12px;color:#ff0000;right:322.50px;top:661.14px;transform:scaleX(0.9320);transform-origin:right center;">(3,784.71)</span>
<span style="font-size:12px;line-height:12px;color:#ff0000;left:479.50px;top:661.14px;transform:scaleX(0.7477);transform-origin:left center;">$</span>
<span style="font-size:12px;line-height:12px;color:#ff0000;right:209.50px;top:661.14px;transform:scaleX(0.9320);transform-origin:right center;">(933.10)</span>
<span style="font-size:12px;line-height:12px;color:#111111;left:593.25px;top:661.14px;transform:scaleX(0.7477);transform-origin:left center;">$</span>
<span style="font-size:12px;line-height:12px;color:#111111;right:131.25px;top:661.14px;transform:scaleX(0.9320);transform-origin:right center;">220,158.39</span>
<span style="font-size:12px;line-height:12px;color:#ff0000;left:675.00px;top:661.14px;transform:scaleX(0.7477);transform-origin:left center;">$</span>
<span style="font-size:12px;line-height:12px;color:#ff0000;right:45.50px;top:661.14px;transform:scaleX(0.9320);transform-origin:right center;">(7,900.86)</span>
<div style="left:0px;top:670px;width:792px;height:28px;background:#f1f1f1;"></div>
<div style="left:0px;top:670px;width:792px;height:1px;background:#ababab;"></div>
<div style="left:0px;top:698px;width:792px;height:3px;background:#217346;"></div>
<svg style="left:24px;top:678px" width="34" height="12"><polygon points="5,1 5,9 1,5" fill="#c6c6c6"/><polygon points="29,1 29,9 33,5" fill="#c6c6c6"/></svg>
<div style="left:97px;top:673px;width:1px;height:21px;background:#ababab;"></div>
<div style="left:217px;top:673px;width:1px;height:21px;background:#ababab;"></div>
<div style="left:535px;top:673px;width:1px;height:21px;background:#ababab;"></div>
<div style="left:670px;top:673px;width:1px;height:21px;background:#ababab;"></div>
<div style="left:782px;top:673px;width:1px;height:21px;background:#ababab;"></div>
<div style="left:220px;top:673px;width:105px;height:22px;background:#8fbc21;"></div>
<div style="left:434px;top:673px;width:98px;height:22px;background:#948a54;"></div>
<div style="left:537px;top:673px;width:131px;height:22px;background:#e4b321;"></div>
<div style="left:673px;top:673px;width:107px;height:22px;background:#8fbc21;"></div>
<div style="left:326px;top:670px;width:106px;height:25px;background:#ffffff;border-left:1px solid #ababab;border-right:1px solid #ababab;box-sizing:border-box;"></div>
<div style="left:329px;top:671px;width:100px;height:21px;background:linear-gradient(#ffffff 10%,#f3cdc8 60%,#e8a59c);"></div>
<div style="left:327px;top:693px;width:106px;height:2px;background:#217346;"></div>
<span style="font-size:13px;line-height:13px;color:#444444;left:113.75px;top:677.00px;transform:scaleX(0.9920);transform-origin:left center;">Documentation</span>
<span style="font-size:13px;line-height:13px;color:#000000;left:232.50px;top:677.00px;transform:scaleX(0.9597);transform-origin:left center;">Loan Analysis</span>
<span style="font-size:13px;line-height:13px;color:#217346;font-weight:bold;left:338.75px;top:677.00px;">Amortization</span>
<span style="font-size:13px;line-height:13px;color:#000000;left:445.75px;top:677.00px;transform:scaleX(0.9932);transform-origin:left center;">Depreciation</span>
<span style="font-size:13px;line-height:13px;color:#000000;left:550.00px;top:677.00px;transform:scaleX(0.9858);transform-origin:left center;">Income Statement</span>
<span style="font-size:13px;line-height:13px;color:#000000;left:684.50px;top:677.00px;transform:scaleX(0.9787);transform-origin:left center;">Rate of Return</span>
</div></body></html>
